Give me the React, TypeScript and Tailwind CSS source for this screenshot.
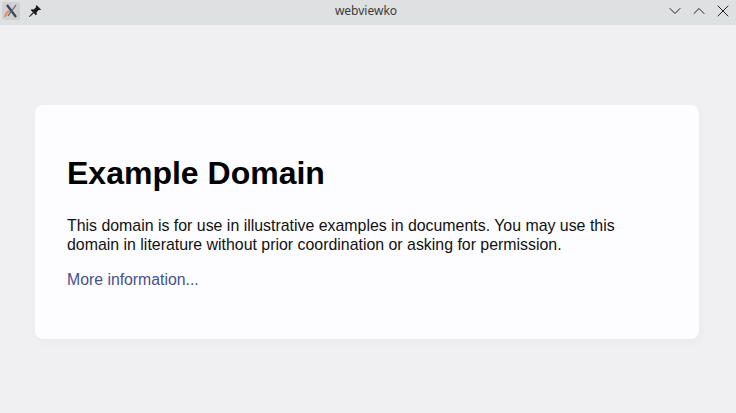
import { ChevronDown, ChevronUp, X } from 'lucide-react';

function AppIcon() {
  return (
    <div className="w-[18px] h-[18px] bg-[#cfd0d2] rounded-[2px] flex items-center justify-center">
      <svg width="16" height="16" viewBox="0 0 16 16" fill="none">
        <path d="M2 14 Q3 9 7 8" stroke="#d9926a" strokeWidth="2.2" />
        <path d="M4 2 L13 14" stroke="#3c4250" strokeWidth="2.2" />
        <path d="M5 13 L13 2" stroke="#5a6070" strokeWidth="1.2" />
      </svg>
    </div>
  );
}

function PinIcon() {
  return (
    <svg width="14" height="14" viewBox="0 0 14 14" fill="#1a1a1a">
      <path d="M8.5 1 L13 5.5 L12 6.2 L11 5.8 L8.6 8.2 L8.8 10.4 L7.8 11.2 L2.8 6.2 L3.6 5.2 L5.8 5.4 L8.2 3 L7.8 2 Z" />
      <path d="M4.6 8.4 L5.6 9.4 L1.6 13 L1 12.4 Z" />
    </svg>
  );
}

export default function App() {
  return (
    <div className="w-[736px] h-[413px] flex flex-col bg-[#f0f0f2] font-['Liberation_Sans',sans-serif] overflow-hidden">
      {/* Title bar */}
      <div className="h-[25px] shrink-0 bg-[#dfe0e2] flex items-center justify-between pl-[2px] pr-[3px] pb-[4px] relative">
        <div className="flex items-center gap-[8px]">
          <AppIcon />
          <PinIcon />
        </div>
        <span className="absolute left-0 right-[4px] top-[2px] text-center text-[12px] text-[#3a3a3a] font-['Noto_Sans',sans-serif]">webviewko</span>
        <div className="flex items-center gap-[4px] text-[#1f2124]">
          <ChevronDown size={20} strokeWidth={1.2} />
          <ChevronUp size={20} strokeWidth={1.2} />
          <X size={20} strokeWidth={1.2} />
        </div>
      </div>

      {/* Page */}
      <div className="flex-1 flex items-start justify-center pt-[80px] pr-[2px]">
        <div className="w-[664px] h-[234px] bg-[#fdfdff] rounded-[8px] shadow-[2px_3px_7px_2px_rgba(0,0,0,0.02)] px-[32px] pt-[50px]">
          <h1 className="text-[32px] leading-[38px] font-bold text-black mb-[24px] mt-[-1px]">Example Domain</h1>
          <p className="text-[15.9px] leading-[19px] text-[#111] mb-[14px]">
            This domain is for use in illustrative examples in documents. You may use this domain in literature without prior coordination or asking for permission.
          </p>
          <a className="text-[15.8px] leading-[19px] text-[#46508f]">More information...</a>
        </div>
      </div>
    </div>
  );
}
